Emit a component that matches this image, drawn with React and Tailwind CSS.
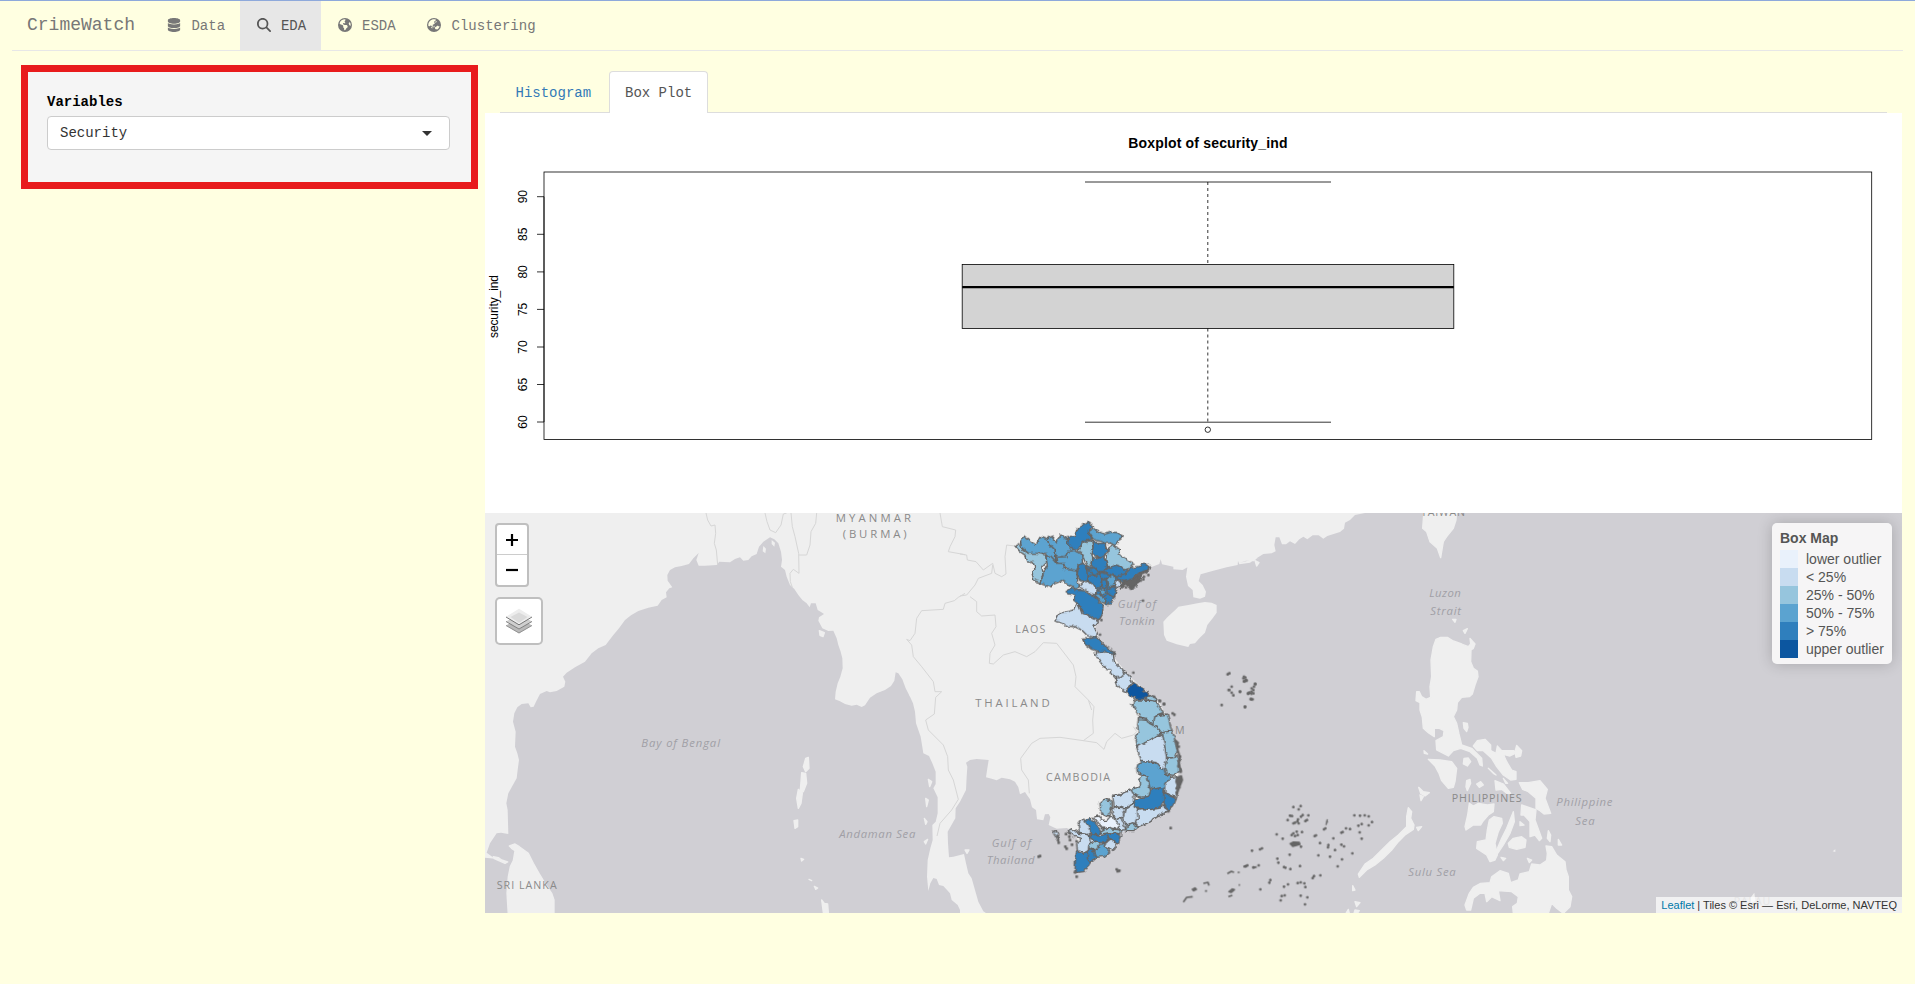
import React from "react";
import { FaDatabase, FaMagnifyingGlass, FaEarthAmericas, FaEarthAsia } from "react-icons/fa6";

const C = { a: "#e9f1fb", b: "#c8dcf0", c: "#96c5dd", d: "#5ba3d0", e: "#2f7fbd", f: "#0c56a0" };

const LAND = "#efefef";
const SEA = "#d0cfd4";

// Shifts a run of "x,y" points by an offset
const seg = (dx, dy, s) =>
  s
    .trim()
    .split(/\s+/)
    .map((p) => {
      const [x, y] = p.split(",").map(Number);
      return `${x + dx},${y + dy}`;
    })
    .join(" ");

const mainland = [
  seg(0, 0, `0,0 0,1043 30,1046 5,1028 15,1000 35,970 48,968 70,972 68,900 64,880 70,850 82,828 95,805 98,780 102,750 97,730 90,710 92,665 84,635 88,610 97,592 110,582 130,580 137,592 146,590 153,575 165,552 185,543 195,547 215,543 238,530 241,515 234,500 245,488 270,472 300,455 320,430 340,415 362,405 385,375 402,355 420,330 438,316 460,303 490,293 518,287 530,270 545,262 543,247 553,235 562,232 548,212 547,195 555,180 570,172 590,168 612,162 625,145 641,129 634,150 641,167 660,167 695,165 703,155 735,157 750,147 765,142 775,152 790,150 800,139 815,132 822,110 835,95 855,82 868,88 880,100 888,125 891,150 888,170 900,180 905,200 915,225 928,237 940,255 952,270 965,280 974,292 978,280 992,280 998,300 1008,306 1017,312 1002,322 1000,332 1012,355 1030,363 1045,362 1055,385 1060,405 1067,425 1072,445 1073,475 1066,500 1058,520 1052,545 1050,568 1065,574 1080,582 1100,587 1115,584 1130,591 1140,586 1155,563 1175,550 1200,540 1218,528 1228,512 1232,487 1240,490 1252,508 1262,535 1275,560 1284,580 1290,605 1293,640 1300,660 1307,680 1315,730 1332,738 1342,760 1352,785 1352,822 1345,835 1358,862 1358,910 1352,935 1342,945 1343,990 1336,1015 1328,1050 1326,1100 1330,1143 1336,1120 1345,1104 1355,1107 1362,1125 1375,1128 1395,1150 1400,1170 1418,1185 1425,1200 1425,1220`),
  seg(1425, 570, `95,650 70,634 55,605 45,570 35,535 25,520 18,490 12,462 -20,470 -33,472 -36,430 -37,395 -20,365 -14,355 -13,325 0,305 18,270 20,230 22,200 18,188 30,180 50,177 86,180 82,205 78,232 95,236 110,241 125,233 150,238 165,245 175,262 180,283 195,276 203,288 210,298 216,322 228,330 231,358 250,361 255,343 266,342 271,352 266,375 290,386 320,384 350,396 352,450 348,515 375,505 400,480 440,465 470,430 485,395 530,382 625,332 650,290 655,220 650,140 635,80 600,10`),
  seg(1425, 0, `600,578 575,558 510,500 460,440 420,392 405,355 430,290 470,245 478,215 565,175 598,162 602,148 606,163 640,170 640,178 668,180 682,172 678,200 684,228 698,240 700,262 720,266 735,260 738,245 728,225 716,213 722,193 760,182 800,172 833,165 834,153 838,163 870,158 885,148 900,143`),
  seg(2265, 0, `0,158 18,152 42,154 52,143 70,132 95,130 107,124 103,105 107,82 118,82 126,103 138,103 150,94 165,102 178,88 190,80 202,88 218,76 236,76 250,86 262,78 300,66 312,56 315,38 330,30 345,15 375,9 375,0`),
].join(" ");

const northProvinces = [
  ["e", "320,85 345,75 352,55 368,45 383,35 398,48 385,65 397,88 370,95 358,118 338,120 322,100"],
  ["d", "385,65 400,55 418,65 435,72 455,66 472,68 487,77 478,92 465,108 450,100 440,100 400,88"],
  ["d", "263,85 275,80 290,98 298,80 303,75 325,88 322,100 338,120 325,128 318,140 288,142 285,120 270,105"],
  ["d", "182,90 192,78 210,92 228,105 238,85 248,80 265,88 270,105 285,120 288,155 260,130 235,130 205,130 182,110"],
  ["c", "165,108 182,98 185,115 205,130 235,130 257,135 260,155 245,170 250,190 240,218 222,212 215,185 225,178 220,158 200,155 195,135 180,125"],
  ["d", "257,135 272,138 288,155 310,162 315,178 350,182 353,212 360,230 348,238 325,222 305,212 275,225 274,233 240,220 250,190 262,165"],
  ["d", "288,142 318,140 325,125 342,120 365,135 368,160 355,165 350,182 320,178 315,160 290,160"],
  ["c", "370,95 395,92 400,115 392,130 397,155 383,170 375,155 365,130 353,122 362,108"],
  ["e", "397,92 415,100 435,100 442,120 430,142 412,142 395,130 400,110"],
  ["c", "445,115 460,105 478,118 478,135 510,155 525,160 508,180 490,175 470,165 445,172 440,150"],
  ["e", "397,142 412,146 432,140 442,155 445,170 430,185 418,185 400,172 392,165"],
  ["e", "355,165 370,160 383,175 385,200 382,215 360,212 352,195"],
  ["e", "385,178 400,172 418,185 405,198 395,190"],
  ["e", "425,185 445,172 470,165 500,180 495,192 470,198 440,190"],
  ["e", "462,203 495,192 512,175 540,168 545,163 560,163 572,172 560,180 535,190 522,205 490,215 480,210"],
  ["e", "385,198 405,198 418,186 425,210 420,235 408,235 395,220 382,212"],
  ["e", "420,186 442,192 462,197 445,205 436,210 425,205"],
  ["d", "443,205 462,195 466,218 458,230 445,226"],
  ["b", "465,220 475,208 482,222 472,238 462,232"],
  ["e", "426,208 438,210 442,228 432,238 424,225"],
  ["e", "440,238 452,230 470,238 464,262 442,250"],
  ["d", "415,240 430,235 435,248 422,252"],
  ["e", "430,262 442,250 462,262 440,288 430,275"],
  ["d", "406,258 420,253 438,268 437,280 415,268"],
  ["b", "357,228 375,212 385,218 400,222 412,240 408,255 388,250 378,240 360,235"],
  ["e", "318,245 335,235 350,240 370,242 385,252 408,258 412,270 430,285 427,310 415,333 390,318 365,308 358,285 340,270 345,255 328,252"],
  ["b", "285,333 292,318 300,308 320,306 340,300 352,280 358,290 365,308 390,320 415,333 402,350 412,370 410,385 380,375 365,360 345,350 320,348 305,338"],
  ["e", "368,388 385,386 412,382 422,392 435,408 455,420 464,432 440,432 415,424 395,418 375,402"],
  ["b", "405,428 430,425 460,433 463,455 480,472 495,490 485,502 462,500 450,480 438,478 420,455"],
  ["b", "465,500 485,500 500,490 510,500 518,518 498,545 488,540 472,528"],
  ["f", "498,545 508,535 518,518 545,535 570,555 552,568 525,568"],
  ["c", "556,568 568,555 585,565 592,575 575,574"],
];

const southProvinces = [
  ["c", "515,12 530,0 545,0 575,2 590,5 610,40 585,50 578,75 568,70 560,58 540,54 528,30"],
  ["c", "585,50 602,45 622,42 635,92 605,100 590,80 578,75"],
  ["c", "535,56 560,58 568,70 578,75 590,80 604,98 570,120 530,142 525,120 535,95 533,75"],
  ["b", "530,142 570,120 607,100 615,140 620,180 612,210 600,205 588,187 545,185 538,165"],
  ["c", "607,98 620,95 636,93 645,120 653,155 645,170 630,174 621,170 615,140"],
  ["c", "621,175 645,172 655,165 660,215 640,226 618,222 612,210"],
  ["d", "535,190 545,185 585,188 600,205 615,210 620,225 632,230 616,262 585,268 570,262 562,228 533,220 530,205"],
  ["b", "614,255 632,232 655,230 650,292 632,287 614,272"],
  ["c", "538,235 545,225 562,228 566,255 572,268 566,290 545,292 522,285 512,268 538,262"],
  ["e", "518,302 545,292 566,290 572,268 612,262 613,300 598,325 570,329 545,326 525,324"],
  ["e", "612,274 630,288 649,296 640,318 625,332 612,310"],
  ["b", "530,330 545,326 572,329 598,325 613,314 622,332 560,370 535,380 524,366"],
  ["b", "458,285 475,286 495,275 512,268 522,285 520,305 495,328 485,322 462,320"],
  ["c", "420,308 432,297 455,303 457,322 450,335 446,352 422,340"],
  ["b", "455,328 465,320 475,325 495,326 490,350 475,358 458,345"],
  ["b", "495,328 520,308 532,332 535,355 524,370 500,374 488,357"],
  ["b", "463,350 480,358 490,370 497,388 482,392 470,370"],
  ["c", "500,376 518,368 535,380 518,395 498,394"],
  ["a", "400,352 418,348 425,360 440,362 450,350 462,356 478,378 470,388 450,382 428,386 415,372"],
  ["c", "420,394 440,383 460,388 485,390 482,402 450,398 425,402"],
  ["e", "375,362 392,355 405,368 420,388 422,402 408,407 386,395"],
  ["b", "355,375 370,356 385,378 394,398 385,404 358,400"],
  ["b", "325,392 335,386 355,400 385,404 390,425 385,450 378,458 352,452 350,432 366,415 345,410"],
  ["e", "383,408 398,402 422,410 442,400 450,412 430,430 405,424"],
  ["e", "444,400 465,400 482,405 475,432 455,420 446,410"],
  ["b", "435,428 450,416 472,432 460,452 440,440"],
  ["c", "388,430 405,423 420,428 415,445 398,450 386,444"],
  ["d", "400,452 420,440 430,428 450,455 432,470 408,472"],
  ["e", "382,455 390,448 402,456 412,474 400,482 388,490 380,475"],
  ["e", "350,452 365,460 382,455 382,475 390,488 372,515 345,518 346,480"],
  ["b", "278,393 292,392 296,402 294,420 287,408"],
];

// Offshore islets, "x,y" in each sheet's own units
const isletsNorth =
  "549,272 424,330 420,374 462,428 520,488 582,560 600,573 612,582 803,493 808,490 852,500 858,510 852,514 886,522 882,530 874,545 880,550 865,550 874,568 815,530 808,540 815,548 820,556 840,545 806,540 785,585 855,591 565,195 552,200 550,208 558,186 512,236 498,232 520,232 535,214 542,212";
const isletsSouth =
  "598,2 612,12 638,40 643,44 648,125 656,140 660,170 658,182 655,198 662,215 655,240 660,236 654,255 660,250 650,265 658,262 650,278 632,384 625,334 292,408 294,420 296,428 318,402 330,400 328,410 330,420 336,434 316,440 320,446 350,424 350,530 240,468 236,470 345,517 470,508 478,512 473,514";
const isletsSea =
  "160,891 182,888 176,898 150,917 156,918 188,915 205,916 183,920 196,933 201,930 143,930 165,938 172,934 160,940 176,940 174,928 186,966 170,965 155,975 160,970 165,978 173,975 110,973 128,986 228,976 224,978 240,999 265,1005 264,1012 280,985 285,1020 256,955 252,958 308,966 304,968 318,955 330,957 343,916 360,917 374,916 386,919 396,936 386,946 365,942 355,947 359,967 365,986 304,1004 312,1009 337,1030 306,1048 270,1040 293,1069 235,1036 183,1010 149,1034 112,1046 115,1058 132,1071 136,1073 151,1077 180,1068 36,1022 60,1018 66,1015 16,1069 40,1072 56,1066 22,1066 88,1118 91,1110 61,1138 132,1130 144,1123 173,1119 182,1117 193,1120 196,1131 222,1098 218,1104 241,1096 182,1157 202,1162 125,1158 134,1156 122,1171 195,1183 10,505 16,503 20,512 14,514 45,522 35,535 40,540 28,548 24,551 34,551 32,567 38,568 15,590 0,545";

const cross = (s) =>
  s
    .split(" ")
    .map((p) => {
      const [x, y] = p.split(",").map(Number);
      return `M${x - 4},${y}h8M${x},${y - 4}v8`;
    })
    .join("");

const philippines = [
  "602,382 622,382 640,393 665,402 685,410 692,402 690,385 705,402 700,415 693,420 692,455 700,475 712,483 714,500 705,525 697,552 688,560 665,562 652,578 650,600 640,620 650,640 657,672 665,705 695,715 725,745 727,768 720,765 712,745 690,725 662,715 640,722 625,738 590,720 588,692 610,680 612,662 598,655 583,655 583,680 565,668 550,655 547,622 540,600 540,578 528,572 530,545 538,545 545,560 558,568 572,562 570,530 575,500 573,450 580,410 588,388",
  "565,748 600,750 635,755 650,775 645,815 640,832 625,835 605,812 597,790 585,768",
  "700,708 712,692 735,688 752,705 752,722 768,730 772,708 785,722 820,722 830,728 810,738 790,733 800,755 815,780 828,785 828,808 812,810 790,795 770,770 755,745 730,722 712,722",
  "830,706 845,722 842,738 828,742 825,725",
  "670,638 682,640 684,652 680,665 672,655",
  "672,745 685,744 692,755 682,768 670,762",
  "752,722 770,735 748,735",
  "745,775 768,795 760,790",
  "680,812 690,808 692,820 682,842 678,830",
  "710,822 722,815 730,825 718,832",
  "765,812 790,822 812,850 800,850 785,838 768,840",
  "838,818 865,818 900,812 922,838 915,865 932,910 912,912 900,902 888,895 888,865 865,845 848,838",
  "845,885 888,900 885,930 905,985 898,992 885,975 870,980 870,935 852,915 843,915",
  "688,880 700,888 715,880 742,885 762,882 760,905 745,915 728,935 722,945 700,945 678,960 675,950 683,915",
  "748,930 762,920 785,925 787,940 775,965 765,1000 772,1035 765,1050 750,1055 740,1035 710,1015 712,995 738,990 742,960",
  "820,905 823,935 810,970 790,1005 772,1032 770,1020 785,985 800,955",
  "805,1000 820,985 845,980 858,990 855,1012 830,1018 808,1012",
  "918,1008 935,1010 950,1035 975,1055 978,1080 985,1100 985,1140 995,1160 990,1190 970,1210 950,1195 935,1180 925,1210 820,1210 818,1190 832,1180 835,1160 815,1145 775,1142 780,1172 755,1160 740,1175 735,1150 720,1150 700,1165 692,1200 680,1200 675,1185 688,1150 700,1132 722,1120 750,1118 755,1100 780,1082 805,1090 812,1118 835,1110 840,1092 868,1085 875,1062 900,1065 920,1052 922,1030",
  "505,893 515,905 512,925 522,945 520,958 495,975 475,995 455,1020 430,1045 405,1065 380,1080 358,1102 355,1092 375,1062 400,1045 425,1020 450,995 475,975 500,950 500,920",
  "536,832 550,845 568,848 555,858 542,850", "540,855 550,860 543,872", "530,952 545,950 535,962",
  "638,328 648,328 645,337", "670,362 682,356 675,370", "552,722 563,732 553,730",
  "925,962 932,975 930,995 922,985", "955,988 965,1005 955,1005", "783,1042 797,1045 790,1052",
  "862,1045 875,1050 868,1058", "338,1127 345,1140 338,1142", "345,1175 360,1178 350,1190", "345,1200 358,1202 352,1210 342,1210", "318,1210 325,1198 328,1210",
  "790,805 803,820 797,820", "840,935 852,945 840,947",
  "552,0 650,0 648,30 640,55 620,80 610,95 602,143 592,115 570,95 560,65 548,55",
  "45,152 57,158 50,168",
];

const bayIslands = [
  "73,1008 90,1002 103,1010 130,1030 145,1060 162,1090 180,1120 200,1150 207,1170 207,1215 70,1215 66,1150 70,1100 76,1070 85,1052 90,1022 80,1015",
  "25,1040 40,1043 50,1050 68,1056 60,1060 28,1046",
  "962,745 970,742 972,775 962,785 955,770", "950,788 962,790 965,820 955,845 945,850 948,815", "940,838 952,850 948,880 940,895 935,865",
  "927,932 938,930 938,950 930,955", "948,1045 956,1048 950,1053", "972,1108 980,1112", "988,1129 998,1134 992,1138", "1010,1170 1018,1180 1028,1182 1030,1208 1015,1208",
  "1003,362 1018,368 1014,380 1005,376", "1330,808 1340,815 1334,830", "1322,865 1330,870 1325,890", "1318,925 1326,935 1322,943", "1318,995 1328,988 1322,1002",
  "1440,1020 1452,1020 1446,1030",
];

const borders = [
  seg(0, 0, "663,9 668,30 678,48 690,45 692,70 688,100 694,120 698,165"),
  seg(0, 0, "840,9 846,35 855,60 872,68 888,45 895,12 905,9"),
  seg(0, 0, "918,9 922,50 930,80 941,130 942,190 925,178 915,190 916,215 922,232"),
  seg(0, 0, "995,9 992,40 978,65 975,105 965,135 942,135"),
  seg(0, 0, "1365,9 1372,50 1412,60 1410,80 1395,110 1390,125 1440,134"),
  seg(0, 0, "1440,250 1420,262 1408,272 1380,280 1375,298 1310,302 1295,325 1290,370 1275,392 1265,388 1280,405 1285,440 1310,470 1345,515 1350,545 1370,545 1352,562 1348,612 1322,630 1330,660 1375,705 1388,740 1390,780 1405,810 1420,868 1400,900 1365,940 1356,978"),
  seg(1425, 0, "0,132 20,135 22,150 48,155 70,180 98,160 105,190 125,200 138,192 135,140 140,105 165,108"),
  seg(1425, 0, "0,258 20,255 45,225 55,205 95,190 98,165"),
  seg(1425, 0, "30,260 50,275 50,305 65,318 105,315 108,350 95,370 105,405 90,430 88,460 100,462 130,435 165,425 200,440 225,425 250,398 290,400 340,465 348,500 345,530 385,570 395,600"),
  seg(1425, 570, "385,0 402,20 398,60 400,100 370,122 300,112 240,115 215,130 182,175 185,210 205,240 208,280"),
  seg(1425, 570, "370,122 410,128 432,148 440,125 465,100 485,115 520,105 530,95 520,80"),
];

function Label({ x, y, w, children, size = 34, italic = false, fill = "#8a8a8a" }) {
  return (
    <text
      x={x - 2}
      y={y}
      textLength={w}
      fontSize={size}
      fill={fill}
      fontStyle={italic ? "italic" : "normal"}
      fontFamily='"Open Sans", "Noto Sans", sans-serif'
    >
      {children}
    </text>
  );
}

const SEA_TEXT = "#a09fa6";

function MapCanvas() {
  return (
    <svg viewBox="0 9 4251 1200" className="block h-[400px] w-[1417px]">
      <defs>
        <filter id="coast" filterUnits="userSpaceOnUse" x="1400" y="0" width="800" height="1209">
          <feTurbulence type="fractalNoise" baseFrequency="0.07" numOctaves="2" seed="4" result="n" />
          <feDisplacementMap in="SourceGraphic" in2="n" scale="14" xChannelSelector="R" yChannelSelector="G" />
        </filter>
      </defs>
      <rect x="0" y="0" width="4251" height="1220" fill={SEA} />
      <polygon points={mainland} fill={LAND} strokeLinejoin="round" />
      <g fill={LAND}>
        <path d="M835,108l8,8l-2,14l-8,-6zM860,90l10,8l-2,12l-8,-8z" />
        <path d="M1268,533l12,0l3,22l-8,5z" />
      </g>
      <g fill={LAND} stroke={LAND} strokeWidth="4" strokeLinejoin="round">
        {bayIslands.map((p) => (
          <polygon key={p} points={p} />
        ))}
      </g>
      <g fill={LAND} stroke={LAND} strokeWidth="4" strokeLinejoin="round" transform="translate(2265 0)">
        {philippines.map((p) => (
          <polygon key={p} points={p} />
        ))}
      </g>
      <g transform="translate(1425 0)">
        <polygon
          fill={LAND}
          points="610,335 622,322 648,298 655,290 685,285 712,280 735,276 755,278 770,285 770,308 758,325 742,345 735,368 718,385 705,400 690,402 685,411 650,403 620,392 612,375"
        />
      </g>
      <g transform="translate(3225 0)" fill={LAND}>
        <path d="M583,1148L586,1172L572,1180L568,1168zM818,1024l8,-6v8z" />
      </g>
      <g fill="none" stroke="#d6d6d6" strokeWidth="3" strokeLinejoin="round">
        {borders.map((p) => (
          <polyline key={p} points={p} />
        ))}
      </g>

      <Label x={1054} y={36} w={226}>MYANMAR</Label>
      <Label x={1075} y={84} w={192}>(BURMA)</Label>
      <Label x={1593} y={369} w={90} size={32}>LAOS</Label>
      <Label x={1473} y={591} w={223}>THAILAND</Label>
      <Label x={1685} y={813} w={192} size={32}>CAMBODIA</Label>
      <Label x={2072} y={672} w={28} size={32}>M</Label>
      <Label x={37} y={1137} w={180} size={32}>SRI LANKA</Label>
      <Label x={2810} y={18} w={132} size={32}>TAIWAN</Label>
      <Label x={2902} y={876} w={210} size={32}>PHILIPPINES</Label>
      <Label x={3748} y={1186} w={110} size={32} fill="#a8a8a8">PALAU</Label>
      <Label x={471} y={712} w={236} italic fill={SEA_TEXT}>Bay of Bengal</Label>
      <Label x={1065} y={984} w={228} italic fill={SEA_TEXT}>Andaman Sea</Label>
      <Label x={1900} y={294} w={115} italic fill={SEA_TEXT}>Gulf of</Label>
      <Label x={1904} y={345} w={107} italic fill={SEA_TEXT}>Tonkin</Label>
      <Label x={1522} y={1011} w={118} italic fill={SEA_TEXT}>Gulf of</Label>
      <Label x={1507} y={1062} w={144} italic fill={SEA_TEXT}>Thailand</Label>
      <Label x={2835} y={261} w={94} italic fill={SEA_TEXT}>Luzon</Label>
      <Label x={2838} y={315} w={92} italic fill={SEA_TEXT}>Strait</Label>
      <Label x={2772} y={1098} w={142} italic fill={SEA_TEXT}>Sulu Sea</Label>
      <Label x={3216} y={888} w={168} italic fill={SEA_TEXT}>Philippine</Label>
      <Label x={3273} y={945} w={58} italic fill={SEA_TEXT}>Sea</Label>

      <g stroke="#656565" strokeWidth="4.2" strokeLinejoin="round">
        <g filter="url(#coast)">
          <g transform="translate(1425 0)">
            <path d="M482,222L500,208L525,205L535,190L552,182L570,178L562,186L545,195L538,212L530,228L515,236L500,226L485,234Z" fill="#656565" />
            <polygon points="355,200 385,170 440,170 490,185 475,225 460,262 440,280 410,262 400,225" fill="#2f7fbd" />
            {northProvinces.map(([c, p]) => (
              <polygon key={p} points={p} fill={C[c]} />
            ))}
          </g>
          <g transform="translate(1425 570)">
            <polygon points="380,365 400,385 470,385 470,340 500,325 540,300 600,275 610,300 530,350 500,385 478,405 465,440 430,460 390,480 355,500 355,455 385,440 360,400" fill="#c8dcf0" stroke="none" />
            {southProvinces.map(([c, p]) => (
              <polygon key={p} points={p} fill={C[c]} />
            ))}
          </g>
        </g>
        <g transform="translate(1425 0)">
          <path d={cross(isletsNorth)} strokeWidth="5" />
        </g>
        <g transform="translate(1425 570)">
          <path d={cross(isletsSouth)} strokeWidth="6" />
          <path d="M650,232L664,228L667,240L658,262L650,285L655,262L648,245ZM645,120L655,128L650,140L660,170L655,190L664,215" fill="#656565" strokeWidth="5" />
          <path d="M670,606L680,592L698,590M697,568l8,-4l4,4l-8,4zM730,550l14,-3l3,10M735,573h6M802,521l12,-7l8,3M833,517h6M850,500l12,-3M878,503l12,-2M805,590l12,-4M807,575l10,-8l6,2l-10,8zM836,555h4" fill="none" strokeWidth="5" />
        </g>
        <g transform="translate(2265 0)">
          <path d={cross(isletsSea)} strokeWidth="4.4" />
          <path d="M150,1001L160,996L178,997L180,1003L158,1009ZM262,928L258,945M258,936h6" fill="#656565" strokeWidth="4" />
        </g>
      </g>
    </svg>
  );
}

function LayersIcon() {
  return (
    <svg viewBox="0 0 26 26" className="h-[26px] w-[26px]">
      <path d="M0 17.5L13 10l13 7.5L13 25.2z" fill="#b9b9b9" />
      <path d="M0 17.5L13 25l13-7.5" fill="none" stroke="#8a8a8a" strokeWidth="0.9" />
      <path d="M0 13.5L13 6l13 7.5L13 21.2z" fill="#cfcfcf" />
      <path d="M0 13.5L13 21l13-7.5" fill="none" stroke="#777" strokeWidth="0.9" />
      <path d="M0 8.7L13 .8l13 7.9L13 16.8z" fill="#ededed" />
      <path d="M4.5 9L13 4.6 21.5 9 13 15z" fill="#dadada" />
      <path d="M0 9L13 16.8 26 9" fill="none" stroke="#777" strokeWidth="1" />
    </svg>
  );
}

const legend = [
  ["bg-[#e9f1fb]", "lower outlier"],
  ["bg-[#c8dcf0]", "< 25%"],
  ["bg-[#96c5dd]", "25% - 50%"],
  ["bg-[#5ba3d0]", "50% - 75%"],
  ["bg-[#2f7fbd]", "> 75%"],
  ["bg-[#0c56a0]", "upper outlier"],
];

function MapPanel() {
  return (
    <div className="relative h-[400px] w-[1417px] overflow-hidden font-['Liberation_Sans',Arial,sans-serif]">
      <MapCanvas />
      <div className="absolute top-[10px] left-[10px] flex flex-col gap-[10px]">
        <div className="w-[34px] rounded-[4px] border-2 border-black/20 bg-white bg-clip-padding">
          <div className="flex h-[30px] items-center justify-center border-b border-[#ccc]">
            <svg viewBox="0 0 12 12" className="h-3 w-3">
              <path d="M0 6h12M6 0v12" stroke="#000" strokeWidth="2.2" />
            </svg>
          </div>
          <div className="flex h-[30px] items-center justify-center">
            <svg viewBox="0 0 12 12" className="h-3 w-3">
              <path d="M0 6h12" stroke="#000" strokeWidth="2.2" />
            </svg>
          </div>
        </div>
        <div className="flex h-12 w-12 items-center justify-center rounded-[5px] border-2 border-black/20 bg-white bg-clip-padding">
          <LayersIcon />
        </div>
      </div>
      <div className="absolute top-[10px] right-[10px] h-[141px] w-[120px] rounded-[5px] bg-white/80 px-2 pt-[6px] text-[14px] leading-[18px] text-[#555] shadow-[0_0_15px_rgba(0,0,0,0.2)]">
        <div className="mb-[2px] h-[19px] leading-[19px] font-bold">Box Map</div>
        {legend.map(([color, label]) => (
          <div key={label} className="flex gap-2 whitespace-nowrap">
            <span className={`h-[18px] w-[18px] ${color}`} />
            <span>{label}</span>
          </div>
        ))}
      </div>
      <div className="absolute right-0 bottom-0 h-4 bg-white/70 px-[5px] text-[11px] leading-4 whitespace-nowrap text-[#333]">
        <span className="text-[#0078a8]">Leaflet</span> | Tiles © Esri — Esri, DeLorme, NAVTEQ
      </div>
    </div>
  );
}

const ticks = [
  [90, 196.7],
  [85, 234.3],
  [80, 271.9],
  [75, 309.4],
  [70, 347],
  [65, 384.5],
  [60, 422],
];

function BoxPlot() {
  return (
    <svg
      viewBox="485 113 1417 400"
      className="block h-[400px] w-[1417px] bg-white"
      fontFamily='"Liberation Sans", Arial, sans-serif'
    >
      <text x="1128.2" y="147.8" textLength="159.4" fontSize="14" fontWeight="700">
        Boxplot of security_ind
      </text>
      <text transform="translate(498 338) rotate(-90)" fontSize="12" textLength="63">
        security_ind
      </text>
      {ticks.map(([v, y]) => (
        <g key={v}>
          <text transform={`translate(527.2 ${y}) rotate(-90)`} textAnchor="middle" fontSize="12">
            {v}
          </text>
          <path d={`M537 ${y}H544`} stroke="#000" strokeWidth="0.8" />
        </g>
      ))}
      <path d="M544 196.7V422" stroke="#000" strokeWidth="0.8" />
      <rect x="544" y="172" width="1327.7" height="267.5" fill="none" stroke="#000" strokeWidth="0.8" />
      <rect x="962.2" y="264.5" width="491.6" height="64" fill="#d3d3d3" stroke="#000" strokeWidth="0.8" />
      <path d="M962.2 287.2H1453.8" stroke="#000" strokeWidth="2.2" />
      <path d="M1085 182H1331M1085 422.2H1331" stroke="#000" strokeWidth="0.8" />
      <path d="M1207.8 182V264.5M1207.8 328.5V422" stroke="#000" strokeWidth="0.8" strokeDasharray="3 3" />
      <circle cx="1207.8" cy="429.7" r="2.7" fill="none" stroke="#000" strokeWidth="0.8" />
    </svg>
  );
}

function NavItem({ icon: Icon, label, active }) {
  return (
    <div className={`flex h-[50px] items-center px-[15px] pb-px ${active ? "bg-[#e7e7e7] text-[#555]" : "text-[#777]"}`}>
      <span className="mr-[8.4px] flex w-[17.5px] justify-center pb-[2px]">
        <Icon className="h-[14px] w-[14px]" />
      </span>
      {label}
    </div>
  );
}

export default function App() {
  return (
    <div className="min-h-screen overflow-hidden border-t border-[#8ea9db] bg-[#ffffe1] font-['Courier_New','Liberation_Mono',monospace] text-[14px] leading-5">
      <nav className="mr-3 ml-3 flex h-[50px] border-b border-[#e7e7e7]">
        <div className="mr-[15.5px] ml-[15px] flex items-center pb-px text-[18px] text-[#777]">CrimeWatch</div>
        <div className="-mb-px flex">
          <NavItem icon={FaDatabase} label="Data" />
          <NavItem icon={FaMagnifyingGlass} label="EDA" active />
          <NavItem icon={FaEarthAmericas} label="ESDA" />
          <NavItem icon={FaEarthAsia} label="Clustering" />
        </div>
      </nav>

      <div className="flex">
        <aside className="mt-[14px] ml-[21px] h-[124px] w-[457px] shrink-0 border-[7px] border-[#e81b1c] bg-[#f5f5f5]">
          <div className="mt-[20px] ml-[19px] w-[403px]">
            <label className="block h-[24px] font-bold leading-[20px] text-black">Variables</label>
            <div className="flex h-[34px] items-center justify-between rounded-[4px] border border-[#ccc] bg-white pr-[17px] pl-3 text-[#333]">
              <span>Security</span>
              <svg viewBox="0 0 10 5" className="h-[5px] w-[10px]">
                <path d="M0 0h10L5 5z" fill="#333" />
              </svg>
            </div>
          </div>
        </aside>

        <main className="ml-[7px] w-[1417px] shrink-0 pt-5">
          <div className="mx-[15px] flex h-[42px] border-b border-[#ddd]">
            <div className="mr-[2px] w-[107px] pt-[12px] pl-[15.5px] text-[#337ab7]">Histogram</div>
            <div className="-mb-px h-[42px] rounded-t-[4px] border border-b-0 border-[#ddd] bg-white px-[15px] pt-[11px] text-[#555]">
              Box Plot
            </div>
          </div>
          <BoxPlot />
          <MapPanel />
        </main>
      </div>
    </div>
  );
}
